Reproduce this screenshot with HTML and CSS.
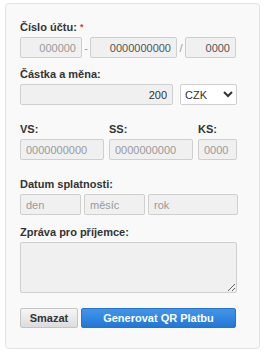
FILE: index.html
```html
<!DOCTYPE html>
<html lang="cs">
<head>
  <meta charset="UTF-8">
  <meta name="viewport" content="width=device-width, initial-scale=1">
  <title>QR Platba</title>
  <link rel="stylesheet" href="styles.css">
</head>
<body>

  <form class="card">
    <div class="group first">
      <label class="lbl">Číslo účtu: <span class="req">*</span></label>
      <div class="row">
        <input class="inp w-pre soft" type="text" placeholder="000000">
        <span class="sep">-</span>
        <input class="inp w-acc" type="text" placeholder="0000000000">
        <span class="sep">/</span>
        <input class="inp w-bank" type="text" placeholder="0000">
      </div>
    </div>

    <div class="group tight">
      <label class="lbl">Částka a měna:</label>
      <div class="row">
        <input class="inp w-amount" type="text" value="200">
        <select class="sel">
          <option>CZK</option>
          <option>EUR</option>
        </select>
      </div>
    </div>

    <div class="group">
      <div class="row symbols">
        <div class="col">
          <label class="lbl">VS:</label>
          <input class="inp left w-vs" type="text" placeholder="0000000000">
        </div>
        <div class="col">
          <label class="lbl">SS:</label>
          <input class="inp left w-ss" type="text" placeholder="0000000000">
        </div>
        <div class="col">
          <label class="lbl">KS:</label>
          <input class="inp left w-ks" type="text" placeholder="0000">
        </div>
      </div>
    </div>

    <div class="group">
      <label class="lbl">Datum splatnosti:</label>
      <div class="row dates">
        <input class="inp left w-day" type="text" placeholder="den">
        <input class="inp left w-month" type="text" placeholder="měsíc">
        <input class="inp left w-year" type="text" placeholder="rok">
      </div>
    </div>

    <div class="group msg">
      <label class="lbl">Zpráva pro příjemce:</label>
      <textarea class="area"></textarea>
    </div>

    <div class="actions">
      <button type="button" class="btn btn-clear">Smazat</button>
      <button type="button" class="btn btn-go">Generovat QR Platbu</button>
    </div>
  </form>

</body>
</html>
```

FILE: styles.css
```css
body {
  margin: 0;
  background: #fff;
  font-family: "Liberation Sans", Arial, sans-serif;
  color: #333;
}

.card {
  box-sizing: border-box;
  width: 255px;
  margin: 3px 0 0 5px;
  padding: 16px 22px 20px 14px;
  background: #f9f9f9;
  border: 1px solid #e2e2e2;
  border-radius: 4px;
}

.group {
  margin-top: 17px;
}

.group.first {
  margin-top: 0;
}

.group.tight {
  margin-top: 9px;
}

.group.msg {
  margin-top: 10px;
}

.lbl {
  display: block;
  font-size: 11px;
  font-weight: bold;
  line-height: 14px;
  margin-bottom: 3px;
  color: #333;
}

.req {
  color: #e0393e;
  font-size: 9px;
  vertical-align: top;
}

.row {
  display: flex;
  align-items: center;
}

.sep {
  width: 8px;
  text-align: center;
  font-size: 11px;
  color: #999;
}

.inp {
  box-sizing: border-box;
  height: 21px;
  padding: 0 5px;
  border: 1px solid #cfcfcf;
  border-radius: 2px;
  background: #f0f0f0;
  font-family: "Liberation Sans", Arial, sans-serif;
  font-size: 11px;
  color: #333;
  text-align: right;
}

.inp::placeholder {
  color: #555;
}

.inp.soft::placeholder,
.inp.left::placeholder {
  color: #999;
}

.inp.left {
  text-align: left;
}

.w-pre { width: 62px; }
.w-acc { width: 87px; }
.w-bank { width: 51px; }
.w-amount { width: 153px; }

.sel {
  box-sizing: border-box;
  width: 57px;
  height: 21px;
  margin-left: 7px;
  border: 1px solid #cfcfcf;
  border-radius: 2px;
  background: #fff;
  font-family: "Liberation Sans", Arial, sans-serif;
  font-size: 11px;
  color: #333;
}

.symbols {
  align-items: flex-start;
}

.col + .col {
  margin-left: 5px;
}

.w-vs { width: 84px; }
.w-ss { width: 84px; }
.w-ks { width: 39px; }

.dates {
  gap: 3px;
}

.w-day { width: 61px; }
.w-month { width: 61px; }
.w-year { width: 90px; }

.area {
  display: block;
  box-sizing: border-box;
  width: 217px;
  height: 51px;
  margin: 0;
  border: 1px solid #cfcfcf;
  border-radius: 2px;
  background: #f0f0f0;
}

.actions {
  display: flex;
  gap: 3px;
  margin-top: 15px;
}

.btn {
  box-sizing: border-box;
  height: 20px;
  border-radius: 2px;
  font-family: "Liberation Sans", Arial, sans-serif;
  font-size: 11px;
  font-weight: bold;
  padding: 0;
}

.btn-clear {
  width: 58px;
  border: 1px solid #c4c4c4;
  background: linear-gradient(#f6f6f6, #dcdcdc);
  color: #333;
}

.btn-go {
  width: 155px;
  border: 1px solid #2a72c6;
  background: linear-gradient(#4196ea, #2277d6);
  color: #fff;
}
```
